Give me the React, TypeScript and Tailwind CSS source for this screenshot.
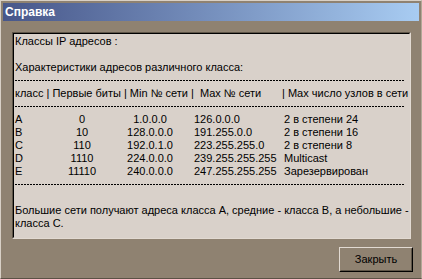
const rows = [
  { cls: "A", bits: "0", min: "1.0.0.0", max: "126.0.0.0", hosts: "2 в степени 24" },
  { cls: "B", bits: "10", min: "128.0.0.0", max: "191.255.0.0", hosts: "2 в степени 16" },
  { cls: "C", bits: "110", min: "192.0.1.0", max: "223.255.255.0", hosts: "2 в степени 8" },
  { cls: "D", bits: "1110", min: "224.0.0.0", max: "239.255.255.255", hosts: "Multicast" },
  { cls: "E", bits: "11110", min: "240.0.0.0", max: "247.255.255.255", hosts: "Зарезервирован" },
];

const Dashes = () => (
  <div className="h-[13px] flex items-center">
    <div className="w-[390px] h-px bg-[repeating-linear-gradient(to_right,#000_0_2px,transparent_2px_3px)]" />
  </div>
);

const App = (): JSX.Element => {
  return (
    <div className="w-[422px] h-[279px] overflow-hidden bg-[#8f8271] border border-t-[#d8d0c6] border-l-[#d8d0c6] border-r-[#b3a897] border-b-[#5b5145] p-[2px] flex flex-col font-['Liberation_Sans',Arial,sans-serif] text-[11px] text-black">
      <div className="h-[18px] flex items-center pl-[2px] bg-gradient-to-r from-[#48578a] to-[#a8ccf2]">
        <span className="text-white font-bold text-[12px]">Справка</span>
      </div>

      <div className="mt-[11px] ml-[9px] mr-[8px] h-[207px] border border-t-[#5e5548] border-l-[#5e5548] border-r-[#e2dad2] border-b-[#e2dad2]">
        <div className="h-full border border-t-black border-l-black border-r-[#d9d1ca] border-b-[#d9d1ca] bg-[#d9d1ca] pl-[1px] pt-[1px] leading-[13px]">
          <div>Классы IP адресов :</div>
          <div className="h-[13px]" />
          <div>Характеристики адресов различного класса:</div>
          <Dashes />
          <div className="flex whitespace-pre">
            <span className="w-[185px]">класс | Первые биты | Min № сети |</span>
            <span className="w-[82px]">Max № сети</span>
            <span>| Max число узлов в сети</span>
          </div>
          <Dashes />
          {rows.map((r) => (
            <div key={r.cls} className="flex whitespace-nowrap">
              <span className="w-[36px]">{r.cls}</span>
              <span className="w-[62px] text-center">{r.bits}</span>
              <span className="w-[74px] text-center">{r.min}</span>
              <span className="ml-[7px] w-[90px]">{r.max}</span>
              <span>{r.hosts}</span>
            </div>
          ))}
          <Dashes />
          <div className="h-[13px]" />
          <div className="whitespace-nowrap">
            Большие сети получают адреса класса А, средние - класса В, а небольшие -
            <br />
            класса С.
          </div>
        </div>
      </div>

      <div className="flex justify-end mt-[8px] mr-[6px]">
        <button
          type="button"
          className="w-[74px] h-[25px] border border-t-[#e2dad2] border-l-[#e2dad2] border-r-black border-b-black bg-[#8f8271]"
        >
          <div className="h-full flex items-center justify-center border border-t-[#8f8271] border-l-[#8f8271] border-r-[#5e5548] border-b-[#5e5548]">
            Закрыть
          </div>
        </button>
      </div>
    </div>
  );
};

export default App;
